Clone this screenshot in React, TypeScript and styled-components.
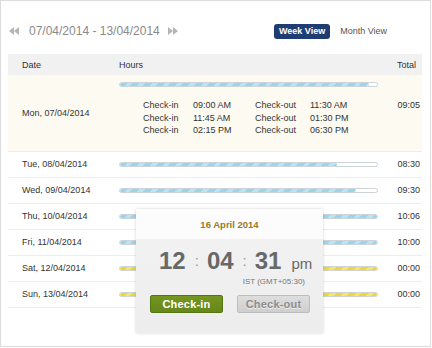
import * as React from 'react';
import styled, { createGlobalStyle } from 'styled-components';

const GlobalStyle = createGlobalStyle`
  body {
    margin: 0;
    background: #ffffff;
    font-family: "Liberation Sans", Arial, sans-serif;
  }
`;

interface ICheck {
  inTime: string;
  outTime: string;
}
interface IDay {
  date: string;
  total: string;
  fill: number;
  tone: 'blue' | 'yellow';
  checks?: ICheck[];
}

const days: IDay[] = [
  {
    date: 'Mon, 07/04/2014',
    total: '09:05',
    fill: 97,
    tone: 'blue',
    checks: [
      { inTime: '09:00 AM', outTime: '11:30 AM' },
      { inTime: '11:45 AM', outTime: '01:30 PM' },
      { inTime: '02:15 PM', outTime: '06:30 PM' },
    ],
  },
  { date: 'Tue, 08/04/2014', total: '08:30', fill: 84.5, tone: 'blue' },
  { date: 'Wed, 09/04/2014', total: '09:30', fill: 92, tone: 'blue' },
  { date: 'Thu, 10/04/2014', total: '10:06', fill: 100, tone: 'blue' },
  { date: 'Fri, 11/04/2014', total: '10:00', fill: 100, tone: 'blue' },
  { date: 'Sat, 12/04/2014', total: '00:00', fill: 100, tone: 'yellow' },
  { date: 'Sun, 13/04/2014', total: '00:00', fill: 100, tone: 'yellow' },
];

const Panel = styled.div`
  position: relative;
  box-sizing: border-box;
  width: 431px;
  height: 347px;
  border: 1px solid #dcdcdc;
  padding: 0 8px 0 7px;
`;
const Toolbar = styled.div`
  display: flex;
  align-items: center;
  height: 20px;
  padding: 20px 0 13px;
`;
const Pager = styled.div`
  display: flex;
  align-items: center;
  flex: 1;
  color: #8a8a8a;
  font-size: 12px;
`;
const PagerArrow = styled.svg`
  display: block;
  margin: 0 10px 0 1px;
`;
const PagerRange = styled.span`
  margin-right: 7px;
`;
const ViewSwitch = styled.div`
  display: flex;
  align-items: center;
  gap: 10px;
  margin-right: 35px;
`;
const ViewButton = styled.button<{ $active?: boolean }>`
  border: 0;
  font-family: inherit;
  font-size: 9px;
  font-weight: ${(p) => (p.$active ? 'bold' : 'normal')};
  color: ${(p) => (p.$active ? '#ffffff' : '#555555')};
  background: ${(p) => (p.$active ? '#1f3d72' : 'transparent')};
  border-radius: 3px;
  height: 15px;
  padding: 0 ${(p) => (p.$active ? '5px' : '0')};
  cursor: pointer;
`;

const Table = styled.div`
  width: 414px;
  font-size: 9px;
  color: #333333;
`;
const Row = styled.div<{ $head?: boolean; $open?: boolean }>`
  display: grid;
  grid-template-columns: 111px 259px 1fr;
  align-items: center;
  box-sizing: border-box;
  min-height: ${(p) => (p.$head ? '21px' : '26px')};
  background: ${(p) => (p.$head ? '#f1f1f1' : p.$open ? '#fdfbf1' : '#ffffff')};
  border-bottom: ${(p) => (p.$head ? '0' : '1px solid #ededed')};
`;
const DateCell = styled.div`
  padding-left: 14px;
`;
const HoursCell = styled.div<{ $open?: boolean }>`
  padding: ${(p) => (p.$open ? '7px 0 14px' : '0')};
`;
const TotalCell = styled.div<{ $open?: boolean }>`
  text-align: right;
  padding-right: 2px;
  align-self: ${(p) => (p.$open ? 'start' : 'center')};
  padding-top: ${(p) => (p.$open ? '24px' : '0')};
  line-height: 12px;
`;
const HeadTotal = styled(TotalCell)`
  padding-right: 6px;
`;
const Track = styled.div`
  box-sizing: border-box;
  height: 5px;
  border: 1px solid #cdd3d6;
  border-radius: 3px;
  background: #ffffff;
  overflow: hidden;
`;
const Fill = styled.div<{ $tone: 'blue' | 'yellow' }>`
  height: 100%;
  border-radius: 2px;
  background: ${(p) =>
    p.$tone === 'blue'
      ? 'repeating-linear-gradient(135deg, #98d5ef 0 5px, #b8e4f6 5px 9px)'
      : 'repeating-linear-gradient(135deg, #f0d630 0 5px, #f6e46c 5px 9px)'};
`;
const CheckList = styled.div`
  display: grid;
  grid-template-columns: 50px 62px 55px auto;
  padding: 12px 0 0 24px;
  line-height: 12.5px;
`;

const Popup = styled.div`
  position: absolute;
  left: 135px;
  top: 208px;
  width: 187px;
  height: 124px;
  background: linear-gradient(#f3f3f3, #ededed);
  box-shadow: 0 0 3px rgba(0, 0, 0, 0.18);
  font-family: "Liberation Sans", Arial, sans-serif;
`;
const PopupDate = styled.div`
  height: 30px;
  line-height: 31px;
  text-align: center;
  background: #fcfcfc;
  color: #9b7a22;
  font-size: 9.5px;
  font-weight: bold;
`;
const Clock = styled.div`
  display: flex;
  align-items: baseline;
  padding: 7px 0 0 23px;
  color: #686868;
  height: 30px;
`;
const ClockDigits = styled.span`
  font-size: 24px;
  font-weight: bold;
  line-height: 30px;
`;
const ClockColon = styled.span`
  font-size: 15px;
  color: #9a9a9a;
  margin: 0 8px 0 9px;
  position: relative;
  top: -3px;
`;
const ClockSuffix = styled.span`
  font-size: 15px;
  margin-left: 10px;
`;
const Zone = styled.div`
  text-align: right;
  padding-right: 18px;
  font-size: 8px;
  color: #777777;
  margin-top: 1px;
`;
const Actions = styled.div`
  display: flex;
  gap: 14px;
  padding: 9px 0 0 14px;
`;
const ActionButton = styled.button<{ $primary?: boolean }>`
  box-sizing: border-box;
  width: 73px;
  height: 18px;
  padding: 0;
  border-radius: 2px;
  font-family: inherit;
  font-size: 11px;
  font-weight: bold;
  letter-spacing: 0.2px;
  border: 1px solid ${(p) => (p.$primary ? '#557412' : '#bdbdbd')};
  background: ${(p) =>
    p.$primary ? 'linear-gradient(#75961f, #66871a)' : 'linear-gradient(#dedede, #cfcfcf)'};
  color: ${(p) => (p.$primary ? '#ffffff' : '#8d8d8d')};
  text-shadow: ${(p) => (p.$primary ? 'none' : '0 1px 0 #eeeeee')};
`;

const Arrows = ({ dir }: { dir: 'back' | 'forward' }) => (
  <PagerArrow width="10" height="8" viewBox="0 0 10 8">
    {dir === 'back' ? (
      <path d="M0 4 L5 0 V8 Z M5 4 L10 0 V8 Z" fill="#b5b5b5" />
    ) : (
      <path d="M0 0 L5 4 L0 8 Z M5 0 L10 4 L5 8 Z" fill="#b5b5b5" />
    )}
  </PagerArrow>
);

const App: React.FunctionComponent = () => {
  return (
    <>
      <GlobalStyle />
      <Panel>
        <Toolbar>
          <Pager>
            <Arrows dir="back" />
            <PagerRange>07/04/2014 - 13/04/2014</PagerRange>
            <Arrows dir="forward" />
          </Pager>
          <ViewSwitch>
            <ViewButton $active>Week View</ViewButton>
            <ViewButton>Month View</ViewButton>
          </ViewSwitch>
        </Toolbar>
        <Table>
          <Row $head>
            <DateCell>Date</DateCell>
            <div>Hours</div>
            <HeadTotal>Total</HeadTotal>
          </Row>
          {days.map((day, i) => {
            const open = !!day.checks;
            return (
              <Row key={i} $open={open}>
                <DateCell>{day.date}</DateCell>
                <HoursCell $open={open}>
                  <Track>
                    <Fill $tone={day.tone} style={{ width: `${day.fill}%` }} />
                  </Track>
                  {day.checks && (
                    <CheckList>
                      {day.checks.map((c, j) => (
                        <React.Fragment key={j}>
                          <span>Check-in</span>
                          <span>{c.inTime}</span>
                          <span>Check-out</span>
                          <span>{c.outTime}</span>
                        </React.Fragment>
                      ))}
                    </CheckList>
                  )}
                </HoursCell>
                <TotalCell $open={open}>{day.total}</TotalCell>
              </Row>
            );
          })}
        </Table>
        <Popup>
          <PopupDate>16 April 2014</PopupDate>
          <Clock>
            <ClockDigits>12</ClockDigits>
            <ClockColon>:</ClockColon>
            <ClockDigits>04</ClockDigits>
            <ClockColon>:</ClockColon>
            <ClockDigits>31</ClockDigits>
            <ClockSuffix>pm</ClockSuffix>
          </Clock>
          <Zone>IST (GMT+05:30)</Zone>
          <Actions>
            <ActionButton $primary>Check-in</ActionButton>
            <ActionButton>Check-out</ActionButton>
          </Actions>
        </Popup>
      </Panel>
    </>
  );
};

export default App;
